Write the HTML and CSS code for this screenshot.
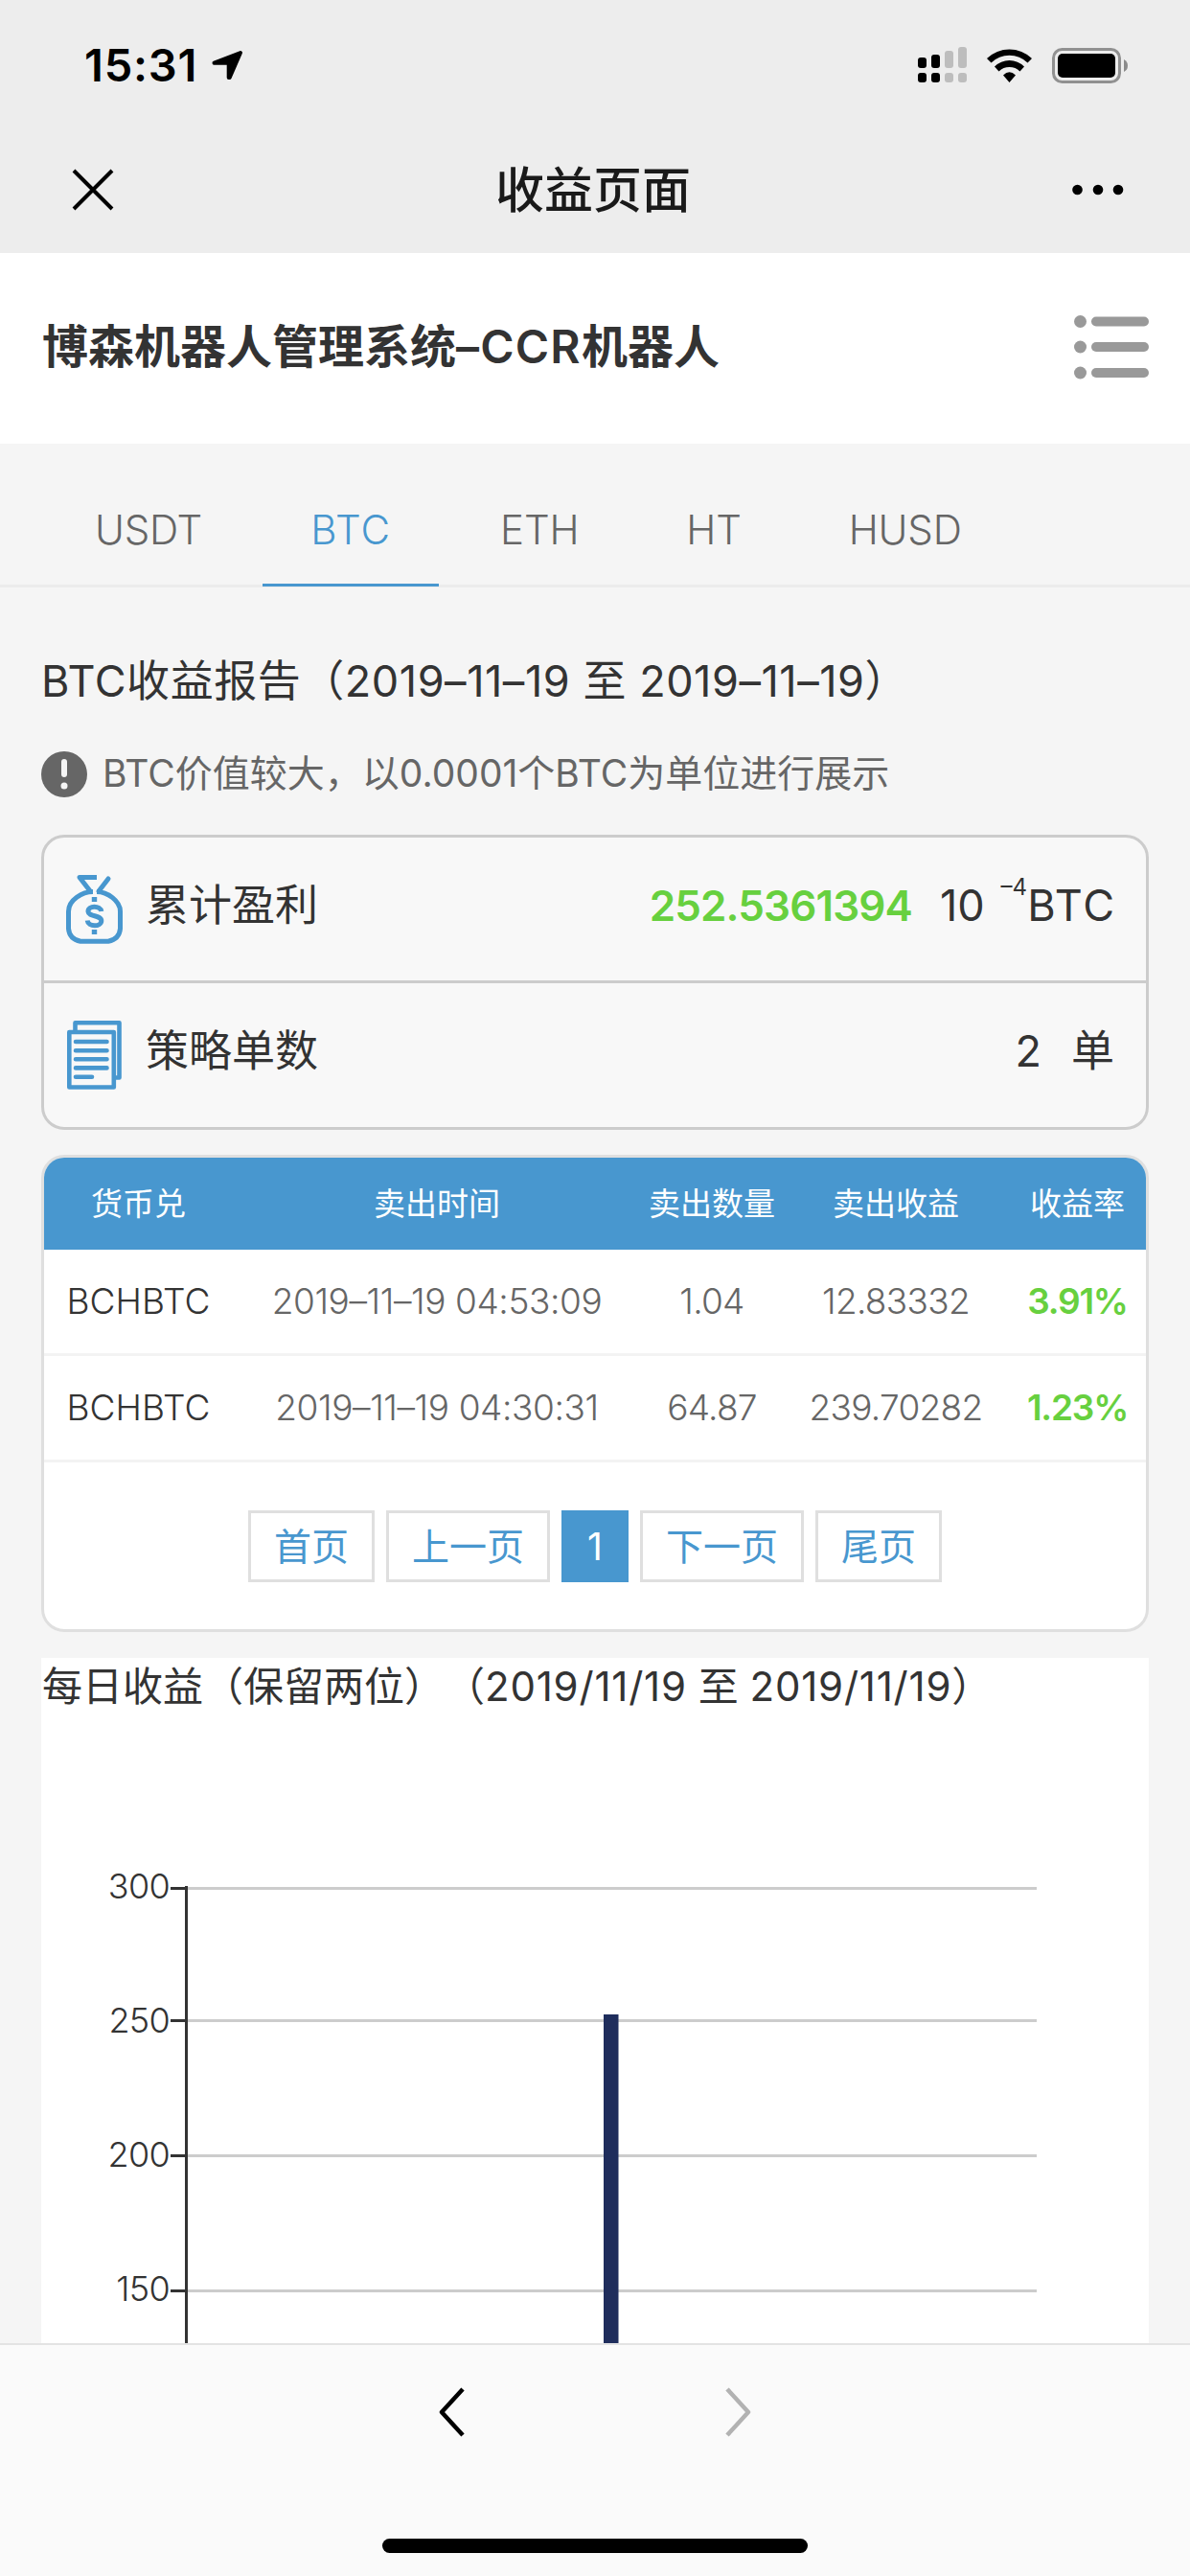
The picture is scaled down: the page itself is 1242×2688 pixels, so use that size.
FILE: index.html
```
<!DOCTYPE html>
<html lang="zh-CN">
<head>
<meta charset="utf-8">
<title>收益页面</title>
<link rel="stylesheet" href="styles.css">
</head>
<body>
<div class="screen">
  <div class="status">
    <span class="clock">15:31</span>
    <svg class="loc" width="36" height="36" viewBox="219 50 36 36"><path d="M251 55L223.5 65.7H238.7V81H239.7Z" fill="#000" stroke="#000" stroke-width="4" stroke-linejoin="round"/></svg>
    <svg class="indicators" width="224" height="42" viewBox="956 46 224 42">
      <g fill="#000"><rect x="958" y="59" width="9" height="11" rx="3"/><rect x="972" y="56" width="9" height="14" rx="3"/><rect x="958" y="75" width="9" height="10" rx="3"/><rect x="972" y="75" width="9" height="10" rx="3"/></g>
      <g fill="#bdbdbd"><rect x="986" y="52" width="9" height="18" rx="3"/><rect x="1000" y="48" width="9" height="22" rx="3"/><rect x="986" y="75" width="9" height="10" rx="3"/><rect x="1000" y="75" width="9" height="10" rx="3"/></g>
      <path d="M1030 60A34 34 0 0 1 1077 60L1072.500 64.500A27 27 0 0 0 1034.500 64.500ZM1038 68.500A22 22 0 0 1 1069 68.500L1064.500 73.500A16 16 0 0 0 1042.500 73.500ZM1047 77.500Q1053.500 71 1060 77.500L1053.500 85Z"/>
      <rect x="1099.500" y="50.500" width="69" height="34" rx="9" fill="none" stroke="#919191" stroke-width="3"/>
      <rect x="1104" y="55" width="60" height="25" rx="5"/>
      <path d="M1173 61Q1177 63 1177 67.500T1173 74Z" fill="#8b8b8b"/>
    </svg>
  </div>
  <div class="nav">
    <svg width="50" height="50" viewBox="0 0 50 50"><path d="M5 5L45 45M45 5L5 45" stroke="#000" stroke-width="4"/></svg>
    <span class="nav-title">收益页面</span>
    <svg width="60" height="14" viewBox="0 0 60 14"><circle cx="8.500" cy="7" r="5.300"/><circle cx="30" cy="7" r="5.300"/><circle cx="51" cy="7" r="5.300"/></svg>
  </div>
  <header class="brand">
    <h1>博森机器人管理系统<span>–CCR</span>机器人</h1>
    <svg width="80" height="68" viewBox="0 0 80 68"><g fill="#999"><circle cx="7.500" cy="7.500" r="6.500"/><circle cx="7.500" cy="34" r="6.500"/><circle cx="7.500" cy="61" r="6.500"/><rect x="19" y="2.500" width="60" height="10" rx="5"/><rect x="19" y="29" width="60" height="10" rx="5"/><rect x="19" y="56" width="60" height="10" rx="5"/></g></svg>
  </header>
  <nav class="tabs">
    <a class="tab">USDT</a><a class="tab on">BTC</a><a class="tab">ETH</a><a class="tab">HT</a><a class="tab">HUSD</a>
  </nav>
  <main>
    <h2>BTC收益报告（2019–11–19 至 2019–11–19）</h2>
    <p class="notice">
      <svg width="48" height="48" viewBox="0 0 48 48"><circle cx="24" cy="24" r="24" fill="#666"/><path d="M24 11V24" stroke="#f5f5f5" stroke-width="6" stroke-linecap="round"/><circle cx="24" cy="36" r="3.500" fill="#f5f5f5"/></svg>
      <span>BTC价值较大，以0.0001个BTC为单位进行展示</span>
    </p>
    <section class="summary">
      <div class="row">
        <svg width="60" height="72" viewBox="19 13 60 72" fill="none" stroke="#4897cf" stroke-width="5" stroke-linejoin="round"><path d="M51 15.500H33L45 31"/><path d="M63 17L53 30" stroke-linecap="round"/><path d="M47 30.500C36 30.500 21.500 39 21.500 51V69Q22.500 80 34 82.300H63Q74.500 80 75.500 69V51C75.500 40 62 30.500 51 30.500"/><path d="M55.800 51C55 44.500 41.500 44.500 42 51.200C42.500 57 56 54.500 55.800 61C55.500 67.500 42 67.500 41.200 60.500"/><path d="M45.800 38.500H51.200M45.800 72.500H51.200"/></svg>
        <span class="label">累计盈利</span>
        <b>252.5361394</b><span class="ten">10</span><sup>–4</sup><span class="unit">BTC</span>
      </div>
      <div class="row">
        <svg width="60" height="72" viewBox="-1 0 60 72" fill="none" stroke="#4897cf" stroke-width="4.600" stroke-linejoin="round"><path d="M8.500 11V2.300H54.500V59.500H50"/><rect x="2.300" y="12" width="46.500" height="57.500"/><path d="M9 22H41.500M9 31.300H41.500M9 40.300H41.500M9 49.400H41.500M9 58.700H26" stroke-linecap="round"/></svg>
        <span class="label">策略单数</span>
        <span class="count">2</span><span>单</span>
      </div>
    </section>
    <section class="orders">
      <div class="tr th"><span>货币兑</span><span>卖出时间</span><span>卖出数量</span><span>卖出收益</span><span>收益率</span></div>
      <div class="tr"><span class="pair">BCHBTC</span><span class="time">2019–11–19 04:53:09</span><span>1.04</span><span>12.83332</span><b>3.91%</b></div>
      <div class="tr"><span class="pair">BCHBTC</span><span class="time">2019–11–19 04:30:31</span><span>64.87</span><span>239.70282</span><b>1.23%</b></div>
      <div class="pager"><a>首页</a><a>上一页</a><a class="cur">1</a><a>下一页</a><a>尾页</a></div>
    </section>
    <section class="chart">
      <h3>每日收益（保留两位）（<i>2019/11/19</i> 至 <i>2019/11/19</i>）</h3>
      <svg width="1156" height="655" viewBox="43 1792 1156 655">
        <path d="M196 1970.500H1082M196 2108.500H1082M196 2249.500H1082M196 2390.500H1082" stroke="#ccc" stroke-width="3"/>
        <path d="M178 1970.500H194M178 2108.500H194M178 2249.500H194M178 2390.500H194M194.500 1968V2447" stroke="#333" stroke-width="3"/>
        <rect x="630" y="2102" width="15.500" height="345" fill="#1f2d5c"/>
        <g class="ticks"><text x="177" y="1981">300</text><text x="177" y="2121">250</text><text x="177" y="2261">200</text><text x="177" y="2401">150</text></g>
      </svg>
    </section>
  </main>
  <footer>
    <div class="arrows">
      <svg width="30" height="54" viewBox="0 0 30 54"><path d="M26 3L4 27L26 51" fill="none" stroke="#000" stroke-width="4.500" stroke-linejoin="round"/></svg>
      <svg width="30" height="54" viewBox="0 0 30 54"><path d="M4 3L26 27L4 51" fill="none" stroke="#b2b2b2" stroke-width="4.500" stroke-linejoin="round"/></svg>
    </div>
    <div class="home"></div>
  </footer>
</div>
</body>
</html>
```
FILE: styles.css
```
* { box-sizing: border-box; margin: 0; padding: 0; }
body { background: #f5f5f5; font-family: Inter, "Noto Sans CJK SC", sans-serif; color: #333; text-spacing-trim: space-all; }
svg { display: block; flex: none; }
.screen { width: 1242px; height: 2688px; display: flex; flex-direction: column; overflow: hidden; }

.status { height: 136px; flex: none; background: #ededed; display: flex; align-items: center; padding: 0 62px 0 88px; color: #000; }
.clock { font-size: 47px; font-weight: 600; letter-spacing: .8px; width: 131px; line-height: 60px; }
.indicators { margin-left: auto; }
.nav { height: 128px; flex: none; background: #ededed; display: flex; align-items: center; justify-content: space-between; padding: 0 66px 5px 72px; }
.nav-title { font-size: 51px; font-weight: 500; color: #1a1a1a; line-height: 60px; padding-top: 2px; }

.brand { height: 199px; flex: none; background: #fff; display: flex; align-items: center; justify-content: space-between; padding: 0 42px 3px 44px; }
h1 { font-size: 48px; font-weight: 600; line-height: 60px; }
h1 span { letter-spacing: 1.2px; }

.tabs { height: 150px; flex: none; display: flex; gap: 12px; padding: 30px 0 0 49px; border-bottom: 3px solid #ececec; }
.tab { font-size: 42px; font-weight: 350; line-height: 120px; height: 119px; padding: 0 50px; color: #666; letter-spacing: -.2px; }
.tab.on { color: #4897cf; border-bottom: 3px solid #4897cf; padding: 0; text-align: center; width: 184px; margin-left: 1px; margin-right: 2px; letter-spacing: 1px; }

main { flex: 1; min-height: 0; padding: 0 43px; display: flex; flex-direction: column; }
h2 { font-size: 45px; font-weight: 400; line-height: 60px; margin-top: 68px; letter-spacing: .55px; white-space: nowrap; }
.notice { display: flex; align-items: center; gap: 16px; font-size: 39px; line-height: 46px; color: #666; margin-top: 43px; height: 48px; }
.notice span { padding-bottom: 2px; }

.summary { margin-top: 39px; height: 308px; flex: none; border: 3px solid #ccc; border-radius: 24px; background: #f8f8f8; font-size: 45px; line-height: 60px; }
.row { height: 149px; display: flex; align-items: center; padding: 0 33px 0 23px; }
.row + .row { height: 152px; border-top: 3px solid #ccc; }
.row > span, .row > b { padding-bottom: 7px; }
.label { margin-left: 23px; margin-right: auto; }
.row b { font-weight: 600; font-size: 44px; color: #67d03f; letter-spacing: -.9px; margin-right: 29px; }
.ten { margin-right: 17px; }
.unit { letter-spacing: 1.8px; margin-right: -2px; }
.count { margin-right: 31px; }
sup { font-size: 24px; line-height: 24px; margin-bottom: 45px; }

.orders { margin-top: 26px; height: 498px; flex: none; border: 3px solid #dfdfdf; border-radius: 24px; background: #fff; overflow: hidden; }
.tr { display: grid; grid-template-columns: 197px 426px 148px 236px 143px; height: 111px; border-bottom: 3px solid #f3f3f3; line-height: 108px; text-align: center; font-size: 37px; font-weight: 350; letter-spacing: -.7px; color: #666; }
.th { height: 96px; border: 0; background: #4897cf; color: #fff; font-size: 33px; font-weight: 400; line-height: 96px; letter-spacing: 0; }
.pair { color: #333; letter-spacing: .1px; }
.time { letter-spacing: -.4px; }
.tr b { color: #67d03f; font-weight: 600; letter-spacing: -1.2px; }
.pager { display: flex; justify-content: center; gap: 12px; margin-top: 50px; }
.pager a { height: 75px; border: 3px solid #dfdfdf; padding: 0 24px; line-height: 69px; font-size: 39px; color: #4897cf; }
.pager .cur { width: 70px; padding: 0; text-align: center; background: #4897cf; border-color: #4897cf; color: #fff; }

.chart { margin-top: 27px; flex: 1; min-height: 0; background: #fff; overflow: hidden; }
h3 { font-size: 42px; font-weight: 400; line-height: 60px; height: 62px; padding-left: 1px; white-space: nowrap; }
h3 i { font-style: normal; letter-spacing: .8px; }
.ticks { font-size: 36px; font-weight: 350; fill: #333; text-anchor: end; letter-spacing: -.7px; }

footer { height: 243px; flex: none; border-top: 2px solid #e3e3e3; background: #fafafa; display: flex; flex-direction: column; align-items: center; justify-content: space-between; padding: 43px 0 24px; }
.arrows { display: flex; gap: 268px; }
.home { width: 444px; height: 15px; border-radius: 8px; background: #000; }
```
